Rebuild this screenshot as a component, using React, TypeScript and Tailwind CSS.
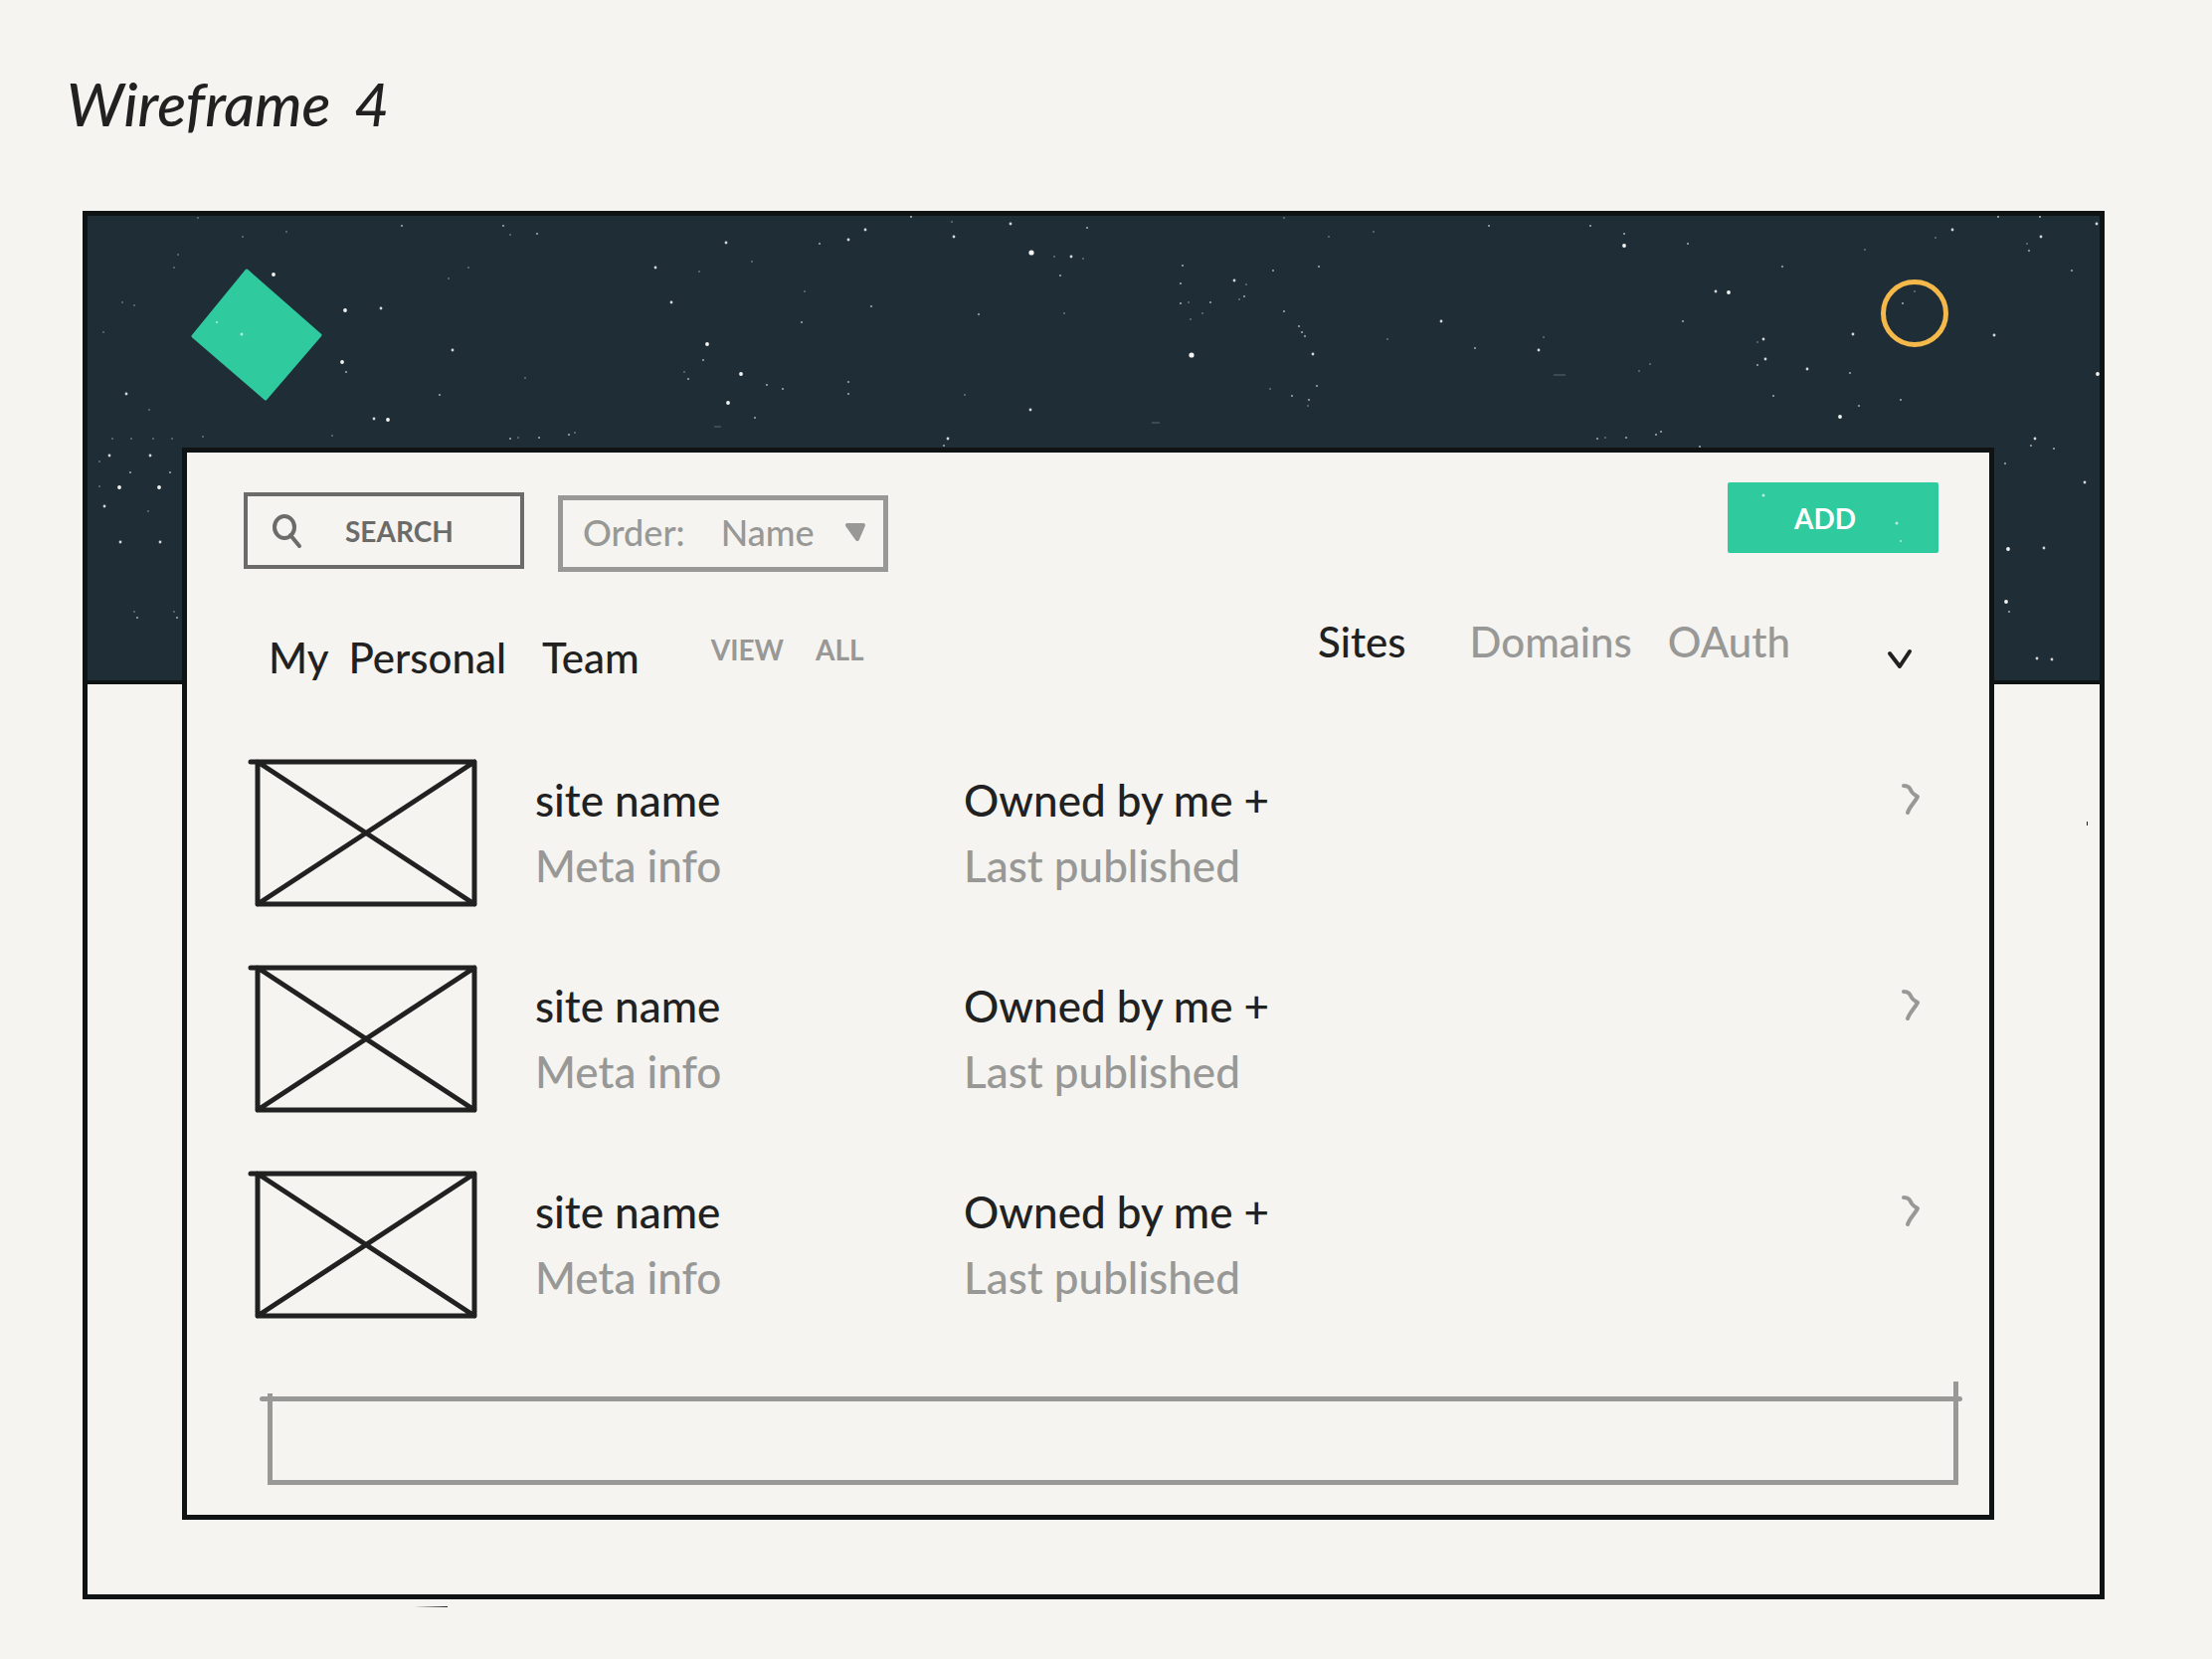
import React from "react";

/* x, y, brightness (1 dim … 5 bright) inside the sky panel */
const stars: [number, number, number][] = [
  [111,2,1],[156,21,1],[200,16,1],[316,10,2],[418,10,2],[425,19,1],[452,18,2],[91,39,1],[87,52,1],[187,59,4],
  [363,63,1],[383,52,1],[35,87,1],[47,90,1],[259,95,4],[295,93,3],[16,117,1],[367,135,3],[256,147,4],[260,157,2],
  [440,163,1],[39,179,3],[354,180,2],[62,195,1],[288,204,3],[302,205,4],[25,224,1],[44,224,1],[66,224,1],[85,224,1],
  [116,222,1],[246,221,1],[425,224,2],[433,223,1],[454,223,2],[484,220,2],[490,218,1],[571,52,3],[587,87,3],[615,56,1],
  [642,27,3],[668,46,1],[721,76,1],[718,107,2],[736,28,2],[765,24,3],[782,14,3],[788,91,2],[828,1,2],[869,6,1],
  [871,21,3],[928,8,3],[949,37,5],[972,41,1],[989,41,3],[1001,43,1],[978,60,2],[1005,12,2],[982,98,1],[896,99,2],
  [623,129,4],[619,145,2],[600,157,1],[604,164,2],[657,159,4],[683,170,2],[699,174,2],[765,167,2],[765,179,2],[644,188,4],
  [671,203,2],[882,180,1],[948,195,3],[865,224,3],[861,231,2],[1203,2,1],[1248,21,1],[1293,16,1],
  [1409,10,2],[1511,10,2],[1545,18,2],[1545,30,4],[1609,28,2],[1101,50,2],[1099,68,2],[1153,65,3],[1165,69,1],[1192,55,2],
  [1238,51,2],[1163,81,2],[1158,84,1],[1099,88,2],[1107,87,1],[1129,87,2],[1121,98,1],[1109,104,1],[1203,96,2],[1218,111,2],
  [1221,117,2],[1224,121,2],[1232,139,3],[1110,140,5],[1189,174,1],[1236,171,2],[1211,181,2],[1228,185,2],[1227,191,1],
  [1307,124,1],[1361,106,3],[1395,133,2],[1459,135,3],[1464,122,1],[1604,106,2],[1571,149,1],[1560,156,1],[1637,76,3],
  [1650,77,4],[1704,51,2],[1787,34,1],[1858,22,1],[1875,14,3],[1921,1,2],[1963,1,2],[1964,21,3],[1950,28,1],[1952,35,2],
  [2020,8,3],[1995,55,2],[1837,76,1],[1825,88,2],[1775,119,3],[1685,124,3],[1679,127,1],[1687,144,3],[1679,150,2],
  [1729,154,3],[1772,158,2],[1917,120,3],[2021,159,4],[1695,181,2],[1781,191,2],[1823,185,2],[1762,202,4],[1518,224,2],
  [1526,223,1],[1547,223,2],[1577,220,2],[1582,217,2],[1621,232,2],[1958,224,3],[1954,231,2],[1977,234,2],[1928,249,2],
  [2008,268,3],[1931,335,4],[1967,334,3],[1929,388,4],[1932,398,2],[1960,445,3],[1975,446,3],[22,241,3],[63,241,3],
  [12,247,1],[43,258,2],[83,258,2],[12,272,1],[32,273,4],[72,273,4],[17,292,3],[61,297,1],[33,328,3],[73,328,3],
  [47,398,1],[50,404,2],[87,398,1],[90,404,2],
];

const radius = [0, 1, 1.1, 1.4, 1.9, 2.6];
const opacity = [0, 0.35, 0.6, 0.85, 1, 1];

function Sky() {
  return (
    <div className="absolute inset-x-0 top-0 h-[471px] overflow-hidden border-b-4 border-[#101314] bg-[#1f2d36]">
      <svg className="size-full" aria-hidden="true">
        {stars.map(([x, y, b]) => (
          <circle key={`${x}-${y}`} cx={x} cy={y} r={radius[b]} opacity={opacity[b]} fill="#f4f6f4" />
        ))}
        <path d="M1474 160h12M1070 208h8M630 212h7" stroke="#f4f6f4" opacity="0.3" />
      </svg>
    </div>
  );
}

function Logo() {
  return (
    <svg width="132" height="133" viewBox="0 0 132 133" role="img" aria-label="Logo">
      <path d="M56 2 130 67 75 131 2 68Z" fill="#2fca9e" stroke="#2fca9e" strokeWidth="3" strokeLinejoin="round" />
      <circle cx="26" cy="54" r="1" fill="#b9ecdc" />
      <circle cx="51" cy="66" r="1.5" fill="#b9ecdc" />
    </svg>
  );
}

function Thumbnail() {
  return (
    <svg width="231" height="149" viewBox="0 0 231 149" fill="none" stroke="#212121" strokeWidth="5" strokeLinecap="round" strokeLinejoin="round" role="img" aria-label="Site preview">
      <path d="M3 3H228V146H10V3M10 3 228 146M228 3 10 146" />
    </svg>
  );
}

function SiteRow() {
  return (
    <li className="grid h-[207px] grid-cols-[289px_431px_1fr_28px] items-start text-[44px] leading-[66px] font-medium">
      <Thumbnail />
      <div className="pt-2">
        <p>site name</p>
        <p className="text-[#989896]">Meta info</p>
      </div>
      <div className="pt-2">
        <p>Owned by me +</p>
        <p className="text-[#989896]">Last published</p>
      </div>
      <button type="button" aria-label="Open site" className="mt-6">
        <svg width="22" height="34" viewBox="0 0 22 34" fill="none" stroke="#989896" strokeWidth="4" strokeLinecap="round" strokeLinejoin="round">
          <path d="M3 3C8 3 9 5 11 9C13 12 14 12 17 14C14 20 9 24 7 30" />
        </svg>
      </button>
    </li>
  );
}

export default function App() {
  return (
    <div className="min-h-screen bg-[#f5f4f0] pr-[108px] pb-[60px] pl-[83px] font-['Lato','Open_Sans',sans-serif] text-[#212121]">
      <h1 className="-ml-4 flex h-[212px] items-center gap-6 pb-1 text-[60px] font-medium italic">
        <span>Wireframe</span>
        <span>4</span>
      </h1>

      <div className="relative border-5 border-[#101314]">
        <Sky />

        <header className="relative flex h-[233px] items-start justify-between pr-[152px] pl-[104px]">
          <div className="pt-[53px]">
            <Logo />
          </div>
          <button type="button" aria-label="Account" className="mt-16 size-[68px] rounded-full border-[5px] border-[#f4b94a]" />
        </header>

        <main className="relative mr-[106px] mb-[75px] ml-[95px] border-5 border-[#101314] bg-[#f5f4f0] pb-[30px]">
          <div className="flex items-start pr-[51px] pl-[57px]">
            <label className="mt-10 flex h-[77px] w-[282px] items-center border-4 border-[#6b6b6a] px-6">
              <svg width="34" height="36" viewBox="0 0 34 36" fill="none" stroke="#6b6b6a" strokeWidth="4" strokeLinecap="round" aria-hidden="true">
                <ellipse cx="13" cy="14" rx="10" ry="11" />
                <path d="M19 22 28 33" />
              </svg>
              <input
                type="text"
                aria-label="Search"
                placeholder="SEARCH"
                className="ml-10 w-36 bg-transparent text-[28px] font-bold outline-none placeholder:text-[#6b6b6a] placeholder:opacity-100"
              />
            </label>

            <div className="mt-[43px] ml-[34px] flex h-[77px] w-[332px] items-center border-5 border-[#989896] pr-4 pb-1 pl-5 text-[36px] font-medium text-[#989896]">
              <label htmlFor="order">Order:</label>
              <select id="order" className="ml-9 flex-1 appearance-none bg-transparent outline-none">
                <option>Name</option>
              </select>
              <svg width="24" height="20" viewBox="0 0 24 20" fill="#989896" stroke="#989896" strokeWidth="4" strokeLinejoin="round" aria-hidden="true">
                <path d="M4 3H20L14 17Z" />
              </svg>
            </div>

            <button type="button" className="relative mt-[30px] ml-auto h-[71px] w-[212px] rounded-xs bg-[#2fca9e] pr-4 text-[28px] font-bold text-white">
              ADD
              <svg className="absolute inset-0 size-full" fill="#b9ecdc" aria-hidden="true">
                <circle cx="36" cy="13" r="1.5" />
                <circle cx="170" cy="41" r="1.5" />
                <circle cx="174" cy="59" r="1" />
              </svg>
            </button>
          </div>

          <div className="mt-10 flex items-start pr-[76px] pl-[82px] font-medium">
            <h2 className="flex gap-5 pt-4 text-[42px] leading-[60px]">
              <span>My</span>
              <span>Personal</span>
              <span className="ml-4">Team</span>
            </h2>
            <a href="#all" className="ml-[72px] flex gap-8 pt-2 text-[28px] leading-[60px] font-bold text-[#989896]">
              <span>VIEW</span>
              <span>ALL</span>
            </a>
            <nav className="ml-auto flex text-[42px] leading-[60px] text-[#989896]">
              <a href="#sites" className="text-[#212121]">Sites</a>
              <a href="#domains" className="ml-16">Domains</a>
              <a href="#oauth" className="ml-9">OAuth</a>
            </nav>
            <button type="button" aria-label="More" className="mt-9 ml-24">
              <svg width="28" height="22" viewBox="0 0 28 22" fill="none" stroke="#212121" strokeWidth="4" strokeLinecap="round" strokeLinejoin="round">
                <path d="M4 6 14 19 24 4" />
              </svg>
            </button>
          </div>

          <ul className="mt-[72px] mb-5 pr-[61px] pl-[61px]">
            <SiteRow />
            <SiteRow />
            <SiteRow />
          </ul>

          <div className="relative mr-[31px] ml-[81px] h-[89px] border-5 border-[#989896]">
            <span className="absolute -top-[5px] -left-[13px] h-[5px] w-3 rounded-l-sm bg-[#989896]" />
            <span className="absolute -top-2 -left-[5px] h-1 w-[5px] bg-[#989896]" />
            <span className="absolute -top-[5px] -right-[9px] h-[5px] w-2 rounded-r-sm bg-[#989896]" />
            <span className="absolute -top-5 -right-[5px] h-4 w-[5px] bg-[#989896]" />
          </div>
        </main>

        <span className="absolute -bottom-[13px] left-[328px] h-px w-[34px] bg-linear-to-r from-transparent to-[#212121]" />
        <span className="absolute top-[609px] right-3 h-1 w-px bg-[#212121]" />
      </div>
    </div>
  );
}
